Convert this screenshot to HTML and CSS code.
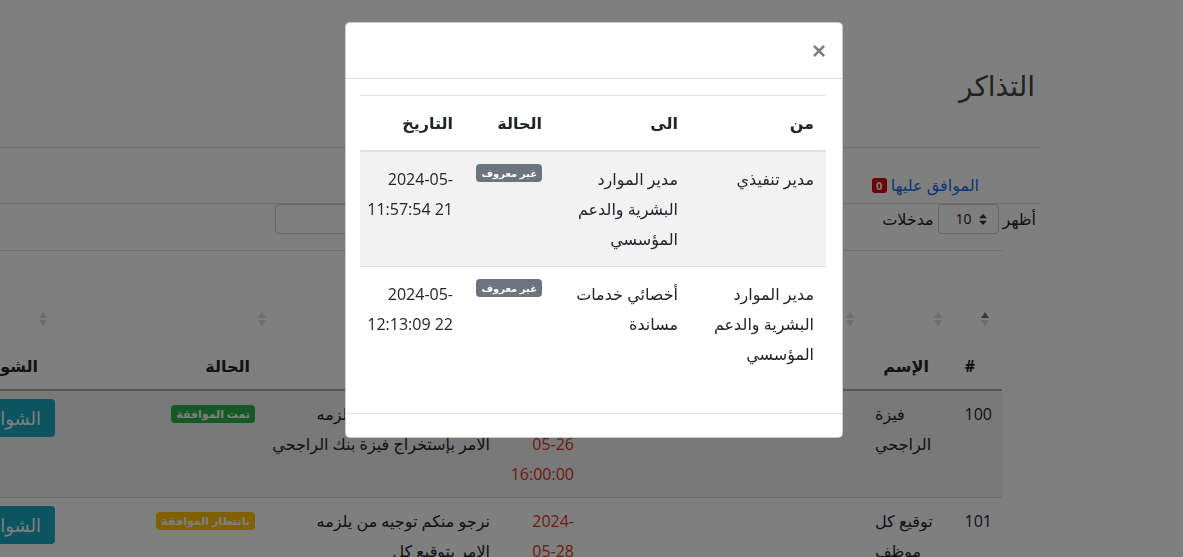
FILE: index.html
```html
<!DOCTYPE html>
<html lang="ar" dir="rtl">
<head>
<meta charset="utf-8">
<title>التذاكر</title>
<link rel="stylesheet" href="styles.css">
</head>
<body>
<div class="page">
  <h1 class="title">التذاكر</h1>
  <hr class="rule">
  <ul class="tabs">
    <li><a class="tab-link" href="#">الموافق عليها <span class="count">0</span></a></li>
  </ul>
  <div class="filters">
    <label class="length">أظهر
      <span class="select">
        <svg class="updown" width="8" height="11" viewBox="0 0 8 11"><path d="M4 0 L8 4.2 L0 4.2 Z M4 11 L8 6.8 L0 6.8 Z" fill="#333"/></svg>
        <span>10</span>
      </span>
      مدخلات</label>
    <label class="search">بحث: <span class="input"></span></label>
  </div>
  <div class="table-wrap">
    <table class="tickets">
      <colgroup>
        <col class="w-num"><col class="w-name"><col class="w-dept"><col class="w-date"><col class="w-text"><col class="w-status"><col class="w-act">
      </colgroup>
      <thead>
        <tr>
          <th class="c-num"><span class="sort"><svg width="8" height="14" viewBox="0 0 8 14"><path d="M4 0 L8 6 L0 6 Z" fill="#777"/><path d="M4 14 L8 8 L0 8 Z" fill="#ddd"/></svg></span><span class="lbl">#</span></th>
          <th><span class="sort"><svg width="8" height="14" viewBox="0 0 8 14"><path d="M4 0 L8 6 L0 6 Z M4 14 L8 8 L0 8 Z" fill="#ddd"/></svg></span><span class="lbl">الإسم</span></th>
          <th><span class="sort"><svg width="8" height="14" viewBox="0 0 8 14"><path d="M4 0 L8 6 L0 6 Z M4 14 L8 8 L0 8 Z" fill="#ddd"/></svg></span><span class="lbl">القسم</span></th>
          <th><span class="sort"><svg width="8" height="14" viewBox="0 0 8 14"><path d="M4 0 L8 6 L0 6 Z M4 14 L8 8 L0 8 Z" fill="#ddd"/></svg></span><span class="lbl">التاريخ</span></th>
          <th><span class="sort"><svg width="8" height="14" viewBox="0 0 8 14"><path d="M4 0 L8 6 L0 6 Z M4 14 L8 8 L0 8 Z" fill="#ddd"/></svg></span><span class="lbl">التفاصيل</span></th>
          <th class="c-status"><span class="sort"><svg width="8" height="14" viewBox="0 0 8 14"><path d="M4 0 L8 6 L0 6 Z M4 14 L8 8 L0 8 Z" fill="#ddd"/></svg></span><span class="lbl">الحالة</span></th>
          <th class="c-act"><span class="sort"><svg width="8" height="14" viewBox="0 0 8 14"><path d="M4 0 L8 6 L0 6 Z M4 14 L8 8 L0 8 Z" fill="#ddd"/></svg></span><span class="lbl">الشواهد</span></th>
        </tr>
      </thead>
      <tbody>
        <tr>
          <td class="c-num">100</td>
          <td class="c-name">فيزة الراجحي</td>
          <td></td>
          <td class="c-date">2024-05-26 16:00:00</td>
          <td class="c-text">نرجو منكم توجيه من يلزمه الامر&nbsp;بإستخراج فيزة بنك الراجحي</td>
          <td class="c-status"><span class="pill pill-green">تمت الموافقة</span></td>
          <td class="c-act"><a class="btn-info" href="#">الشواهد</a></td>
        </tr>
        <tr>
          <td class="c-num">101</td>
          <td class="c-name">توقيع كل موظف</td>
          <td></td>
          <td class="c-date">2024-05-28 09:30:00</td>
          <td class="c-text">نرجو منكم توجيه من يلزمه الامر&nbsp;بتوقيع كل الموظفين&nbsp;على&nbsp;الإقرار</td>
          <td class="c-status"><span class="pill pill-yellow">بانتظار الموافقة</span></td>
          <td class="c-act"><a class="btn-info" href="#">الشواهد</a></td>
        </tr>
      </tbody>
    </table>
  </div>
</div>

<div class="backdrop"></div>

<div class="modal">
  <div class="dialog">
    <div class="content">
      <div class="modal-header">
        <button class="close" type="button">×</button>
      </div>
      <div class="modal-body">
        <table class="log">
          <colgroup><col class="l-from"><col class="l-to"><col class="l-state"><col class="l-date"></colgroup>
          <thead>
            <tr><th>من</th><th>الى</th><th>الحالة</th><th>التاريخ</th></tr>
          </thead>
          <tbody>
            <tr>
              <td>مدير تنفيذي</td>
              <td>مدير الموارد البشرية والدعم المؤسسي</td>
              <td><span class="tag">غير معروف</span></td>
              <td class="when"><span dir="ltr">2024-05-</span><br>21 11:57:54</td>
            </tr>
            <tr>
              <td>مدير الموارد البشرية والدعم المؤسسي</td>
              <td>أخصائي خدمات مساندة</td>
              <td><span class="tag">غير معروف</span></td>
              <td class="when"><span dir="ltr">2024-05-</span><br>22 12:13:09</td>
            </tr>
          </tbody>
        </table>
      </div>
      <div class="modal-footer"></div>
    </div>
  </div>
</div>
</body>
</html>
```

FILE: styles.css
```css
html, body {
  margin: 0;
  padding: 0;
  overflow: hidden;
  height: 100%;
}
body {
  direction: rtl;
  font-family: "Open Sans", "DejaVu Sans", sans-serif;
  font-size: 16px;
  line-height: 30px;
  color: #212529;
  background: #fff;
}
.page {
  padding: 0 143px 0 0;
}
.title {
  margin: 67px 5px 0 0;
  font-size: 28px;
  line-height: 36px;
  font-weight: 400;
  color: #444;
}
.rule {
  margin: 44px 0 0;
  border: 0;
  border-top: 1px solid #ddd;
  height: 0;
}
.tabs {
  list-style: none;
  margin: 0;
  padding: 25px 61px 6px 0;
  border-bottom: 1px solid #ddd;
  line-height: 24px;
}
.tab-link {
  color: #1a6fe0;
  text-decoration: none;
  display: inline-flex;
  align-items: center;
  gap: 4px;
}
.count {
  display: inline-block;
  background: #d40000;
  color: #fff;
  font-size: 11px;
  font-weight: 700;
  line-height: 15px;
  min-width: 15px;
  height: 15px;
  text-align: center;
  border-radius: 3px;
}
.filters {
  display: flex;
  justify-content: space-between;
  align-items: flex-start;
  height: 46px;
}
.length {
  display: flex;
  align-items: center;
  gap: 4px;
  margin-right: 4px;
  height: 30px;
}
.select {
  display: inline-flex;
  flex-direction: row;
  align-items: center;
  gap: 7px;
  box-sizing: border-box;
  width: 61px;
  height: 30px;
  padding: 0 11px 0 0;
  border: 1px solid #ccc;
  border-radius: 4px;
  font-size: 14px;
}
.search {
  display: flex;
  align-items: center;
  gap: 6px;
  margin-left: 275px;
  height: 30px;
}
.input {
  display: inline-block;
  width: 170px;
  height: 30px;
  box-sizing: border-box;
  border: 1px solid #ccc;
  border-radius: 4px;
}
.table-wrap {
  margin-right: 38px;
  overflow: hidden;
}
.tickets {
  width: 1100px;
  border-collapse: collapse;
  table-layout: fixed;
  border-top: 1px solid #ddd;
}
.w-num { width: 52px; }
.w-name { width: 88px; }
.w-dept { width: 276px; }
.w-date { width: 82px; }
.w-text { width: 240px; }
.w-status { width: 201px; }
.w-act { width: 161px; }
.tickets th {
  padding: 61px 8px 8px;
  text-align: right;
  vertical-align: bottom;
  font-weight: 700;
  border-bottom: 2px solid #aaa;
}
.tickets th .sort {
  display: block;
  height: 14px;
  line-height: 14px;
  margin-bottom: 25px;
}
.tickets th .sort svg { display: block; }
.tickets th .lbl {
  display: block;
  margin-right: 13px;
  white-space: nowrap;
}
.tickets th.c-num .sort { margin-right: 5px; }
.tickets th.c-num .lbl { margin-right: 19px; }
.tickets th.c-status .sort { margin-right: -10px; }
.tickets th.c-status .lbl { margin-right: 6px; }
.tickets th.c-act .sort { margin-right: 8px; }
.tickets th.c-act .lbl { margin-right: 17px; }
.tickets td {
  padding: 8px;
  text-align: right;
  vertical-align: top;
  border-top: 1px solid #ddd;
}
.tickets tbody tr:nth-child(odd) { background: #f2f2f2; }
.tickets td.c-num { padding-right: 10px; }
.tickets td.c-name { text-align: left; padding-left: 13px; }
.tickets td.c-date { color: #d9342b; padding-right: 12px; }
.tickets td.c-text { padding-right: 14px; padding-left: 0; }
.tickets td.c-status { padding-right: 9px; }
.pill {
  display: inline-block;
  margin-top: 6px;
  padding: 3px 5px;
  font-size: 11px;
  line-height: 12px;
  font-weight: 700;
  color: #fff;
  border-radius: 4px;
  vertical-align: top;
  white-space: nowrap;
}
.pill-green { background: #2bb24c; }
.pill-yellow { background: #ffc107; }
.btn-info {
  display: inline-block;
  box-sizing: border-box;
  height: 38px;
  padding: 4px 14px;
  background: #17a9c0;
  color: #fff;
  font-size: 18px;
  text-decoration: none;
  border-radius: 4px;
  white-space: nowrap;
}

.backdrop {
  position: fixed;
  inset: 0;
  background: rgba(0, 0, 0, 0.5);
}
.modal {
  position: fixed;
  inset: 0;
  display: flex;
  justify-content: center;
  align-items: flex-start;
  padding-left: 5px;
}
.dialog {
  width: 498px;
  margin-top: 22px;
}
.content {
  background: #fff;
  border: 1px solid rgba(0, 0, 0, 0.2);
  border-radius: 5px;
}
.modal-header {
  display: flex;
  justify-content: flex-start;
  height: 24px;
  padding: 16px 16px 15px;
  border-bottom: 1px solid #dee2e6;
}
.close {
  padding: 0;
  margin: 0;
  border: 0;
  background: transparent;
  font-family: "Liberation Sans", sans-serif;
  font-size: 24px;
  font-weight: 700;
  line-height: 24px;
  color: #000;
  opacity: 0.5;
  cursor: pointer;
}
.modal-body {
  padding: 16px;
}
.log {
  width: 100%;
  border-collapse: collapse;
  table-layout: fixed;
  margin-bottom: 16px;
}
.l-from { width: 136px; }
.l-to { width: 136px; }
.l-state { width: 89px; }
.l-date { width: 105px; }
.log th, .log td {
  padding: 12px;
  text-align: right;
  vertical-align: top;
  border-top: 1px solid #dee2e6;
}
.log th {
  font-weight: 700;
  border-bottom: 2px solid #dee2e6;
}
.log td.when { white-space: nowrap; }
.log tbody tr:nth-child(odd) { background: #f2f2f2; }
.tag {
  display: inline-block;
  padding: 3px 5px;
  font-size: 10px;
  line-height: 12px;
  font-weight: 700;
  color: #fff;
  background: #6c757d;
  border-radius: 4px;
  vertical-align: top;
  white-space: nowrap;
}
.modal-footer {
  height: 23px;
  border-top: 1px solid #dee2e6;
}
```
